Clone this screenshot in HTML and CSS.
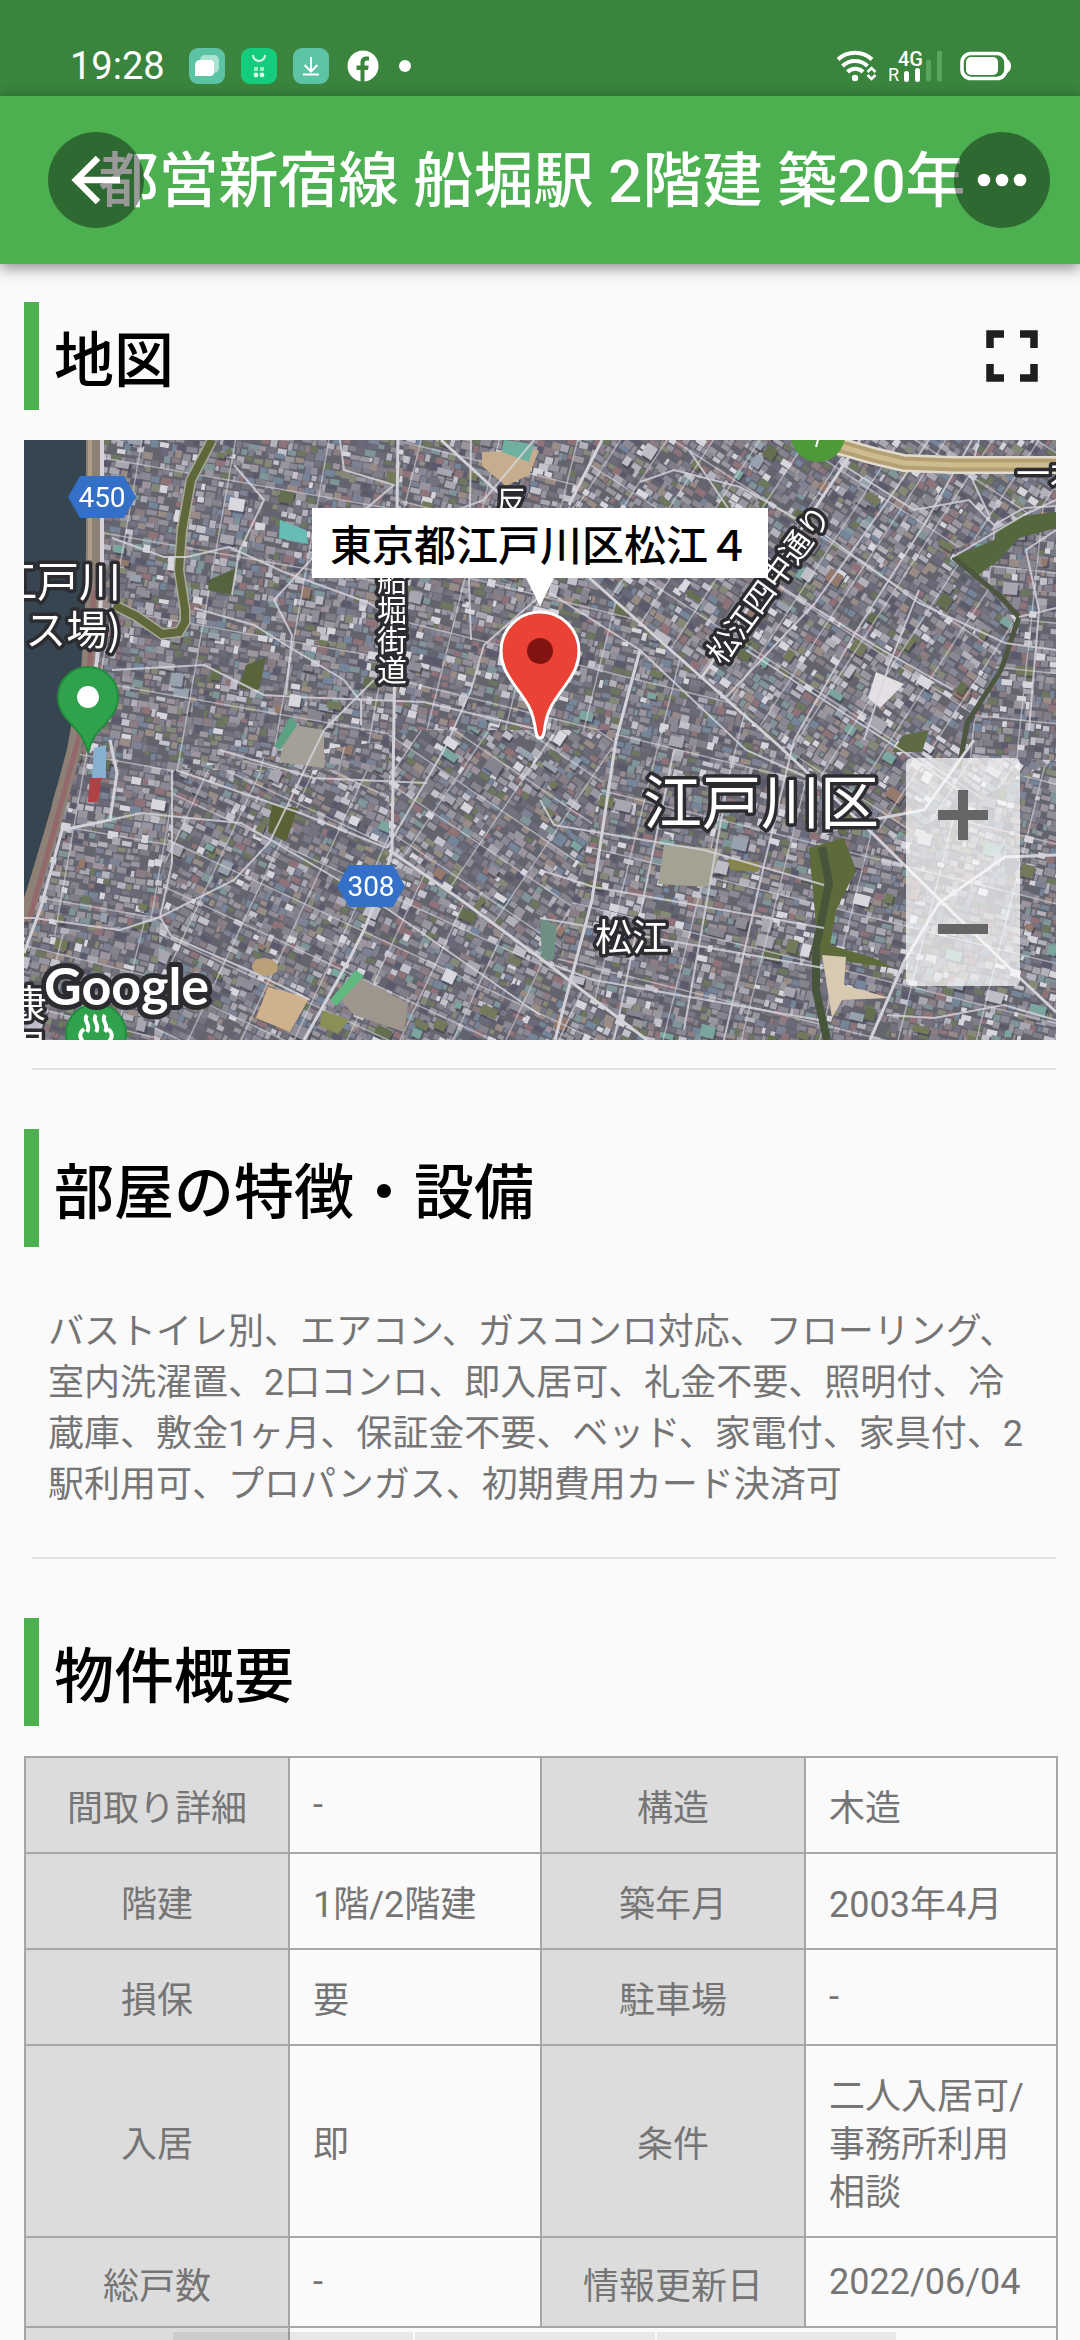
FILE: index.html
```html
<!DOCTYPE html>
<html lang="ja">
<head>
<meta charset="utf-8">
<meta name="viewport" content="width=device-width, initial-scale=1">
<title>都営新宿線 船堀駅 2階建 築20年</title>
<link rel="stylesheet" href="styles.css">
</head>
<body>
<div class="status">
  <span class="clock">19:28</span>
  <svg class="app-icon" viewBox="0 0 36 36" aria-hidden="true"><rect width="36" height="36" rx="9" fill="#5cc4a4"/><rect x="11" y="7" width="19" height="18" rx="5" fill="#a9e3d2"/><path d="M11 12h10a4 4 0 0 1 4 4v8a4 4 0 0 1-4 4H6V17a5 5 0 0 1 5-5z" fill="#fff"/></svg>
  <svg class="app-icon" viewBox="0 0 36 36" aria-hidden="true"><rect width="36" height="36" rx="9" fill="#15cb7c"/><path d="M12 7a6 6 0 0 0 12 0" fill="none" stroke="#d9fbe9" stroke-width="2"/><path d="M13 19h4v4h-4zM19 19h4v4h-4z" fill="#9eedc9"/><circle cx="15" cy="27" r="2.4" fill="#d9fbe9"/><circle cx="21" cy="27" r="2.4" fill="#d9fbe9"/></svg>
  <svg class="app-icon" viewBox="0 0 36 36" aria-hidden="true"><rect width="36" height="36" rx="9" fill="#5cc4a4"/><path d="M18 9v14M11.500 17l6.500 6.500 6.500-6.500M10 26.500h16" fill="none" stroke="#fff" stroke-width="2"/></svg>
  <svg class="app-icon" viewBox="0 0 36 36" aria-hidden="true"><circle cx="18" cy="18" r="15.500" fill="#fff"/><path d="M15.500 34V22h-4v-4.500h4v-3c0-4 2.400-6 6-6 1.200 0 2.500.2 2.500.2v3.800h-2c-1.800 0-2.500 1-2.500 2.300v2.700h4.200l-.7 4.500h-3.500v12z" fill="#3a843d"/></svg>
  <span class="more-dot"></span>
  <svg class="radio" viewBox="0 0 90 36" aria-hidden="true">
    <g fill="none" stroke="#fff" stroke-width="4"><path d="M2 11.500a25 25 0 0 1 34 0"/><path d="M6.500 18a18 18 0 0 1 25 0"/><path d="M11.500 24a11 11 0 0 1 15.500 0"/></g>
    <circle cx="19" cy="30" r="3.200" fill="#fff"/>
    <path d="M31.500 24l4-4 4 4M31.500 27l4 4 4-4" fill="none" stroke="#fff" stroke-width="2.600"/>
    <text x="52" y="33" class="radio-r">R</text>
  </svg>
  <svg class="signal" viewBox="0 0 50 36" aria-hidden="true">
    <text x="0" y="18" class="radio-g">4G</text>
    <path d="M8.500 25.500v6M19.500 22.500v9" stroke="#fff" stroke-width="5" stroke-linecap="round"/>
    <path d="M30.500 14v17M41.500 5v26" stroke="#5ba65e" stroke-width="5" stroke-linecap="round"/>
  </svg>
  <svg class="battery" viewBox="0 0 51 36" aria-hidden="true"><rect x="2" y="5.500" width="44" height="25" rx="9" fill="none" stroke="#fff" stroke-width="3.600"/><rect x="6" y="9" width="32" height="18" rx="5" fill="#fff"/><path d="M47 11c3 2 4 4 4 7s-1 5-4 7z" fill="#fff"/></svg>
</div>

<header class="appbar">
  <h1 class="title">都営新宿線 船堀駅 2階建 築20年</h1>
  <button class="round back" type="button" aria-label="戻る"><svg viewBox="0 0 96 96"><path d="M50 26L28 48l22 22M27 48h45" fill="none" stroke="#fff" stroke-width="6.500"/></svg></button>
  <button class="round menu" type="button" aria-label="メニュー"><svg viewBox="0 0 96 96"><g fill="#fff"><circle cx="30" cy="48" r="6.300"/><circle cx="48" cy="48" r="6.300"/><circle cx="66" cy="48" r="6.300"/></g></svg></button>
</header>

<main class="content">
  <section class="section">
    <div class="head">
      <h2 class="head-text">地図</h2>
      <button class="expand" type="button" aria-label="全画面表示"><svg viewBox="0 0 52 52"><path d="M4 18V4h14M34 4h14v14M48 34v14H34M18 48H4V34" fill="none" stroke="#1f1f1f" stroke-width="7.500"/></svg></button>
    </div>
    <div class="map">
      <canvas class="tiles" id="tiles" width="1032" height="600"></canvas>
      <svg class="overlay" viewBox="0 0 1032 600" lang="ja">
        <g class="labels">
          <text x="97" y="157" font-size="42" text-anchor="end">江戸川</text>
          <text x="97" y="205" font-size="41" text-anchor="end">ス場)</text>
          <text x="368" y="125" font-size="30" class="vertical">船堀街道</text>
          <text font-size="31" text-anchor="middle" transform="translate(754 151) rotate(-54)">松江四中通り</text>
          <text x="472" y="72" font-size="30">反</text>
          <text x="992" y="46" font-size="34">一木</text>
          <text x="619" y="384" font-size="59">江戸川区</text>
          <text x="571" y="511" font-size="37">松江</text>
          <text x="-15" y="577" font-size="38">康</text>
          <text x="-15" y="622" font-size="38">温</text>
        </g>
        <g class="shield">
          <path d="M56 36h44l12 21-12 21H56L44 57z"/><text x="78" y="67">450</text>
          <path d="M325 425h44l12 21-12 21h-44l-12-21z"/><text x="347" y="456">308</text>
        </g>
        <circle cx="794" cy="-5" r="27" fill="#4f9a38"/><path d="M795 -4l-3 11" stroke="#fff" stroke-width="2"/>
        <path d="M64 313c-3-14-8-19-15-27C41 277 34 270 34 257a30 30 0 0 1 60 0c0 13-7 20-15 29-7 8-12 13-15 27z" fill="#31a24c" stroke="#218c3d" stroke-width="2"/><circle cx="64" cy="257" r="11" fill="#fff"/>
        <circle cx="72" cy="594" r="30" fill="#31a24c" stroke="#218c3d" stroke-width="2"/>
        <path d="M63 575c-5 6 5 9 0 17M72 575c-5 6 5 9 0 17M81 575c-5 6 5 9 0 17M60 589c-5 4-5 8 0 14M84 589c5 4 5 8 0 14" fill="none" stroke="#fff" stroke-width="4"/>
        <text x="20" y="565" class="google">Google</text>
        <path d="M516 298c-3 0-4-3-5-12-3-20-12-28-22-43-7-10-12-19-12-32a39 39 0 0 1 78 0c0 13-5 22-12 32-10 15-19 23-22 43-1 9-2 12-5 12z" fill="#ea4335" stroke="#fff" stroke-width="3"/><circle cx="516" cy="211" r="13" fill="#811411"/>
      </svg>
      <div class="callout">東京都江戸川区松江４</div>
      <div class="zoom">
        <button type="button" aria-label="拡大"><svg viewBox="0 0 50 50"><path d="M25 0v50M0 25h50" stroke="#666" stroke-width="10"/></svg></button>
        <button type="button" aria-label="縮小"><svg viewBox="0 0 50 50"><path d="M0 25h50" stroke="#666" stroke-width="10"/></svg></button>
      </div>
    </div>
    <hr class="rule">
  </section>

  <section class="section">
    <div class="head tall"><h2 class="head-text">部屋の特徴・設備</h2></div>
    <p class="features">バストイレ別、エアコン、ガスコンロ対応、フローリング、<br>室内洗濯置、2口コンロ、即入居可、礼金不要、照明付、冷<br>蔵庫、敷金1ヶ月、保証金不要、ベッド、家電付、家具付、2<br>駅利用可、プロパンガス、初期費用カード決済可</p>
    <hr class="rule">
  </section>

  <section class="section">
    <div class="head"><h2 class="head-text">物件概要</h2></div>
    <table class="summary">
      <colgroup><col class="k"><col class="v"><col class="k"><col class="v"></colgroup>
      <tbody>
        <tr><th scope="row">間取り詳細</th><td class="latin">-</td><th scope="row">構造</th><td>木造</td></tr>
        <tr><th scope="row">階建</th><td>1階/2階建</td><th scope="row">築年月</th><td>2003年4月</td></tr>
        <tr><th scope="row">損保</th><td>要</td><th scope="row">駐車場</th><td class="latin">-</td></tr>
        <tr><th scope="row">入居</th><td>即</td><th scope="row">条件</th><td>二人入居可/<br>事務所利用<br>相談</td></tr>
        <tr class="short"><th scope="row">総戸数</th><td class="latin">-</td><th scope="row">情報更新日</th><td class="latin">2022/06/04</td></tr>
        <tr><th></th><td colspan="3"></td></tr>
      </tbody>
    </table>
  </section>
</main>
<div class="handle"><span></span><span></span><span></span></div>
<script src="tiles.js"></script>
</body>
</html>
```
FILE: styles.css
```css
* { box-sizing: border-box; }

body {
  margin: 0;
  height: 100vh;
  display: flex;
  flex-direction: column;
  overflow: hidden;
  background: #fafafa;
  color: #757575;
  font-family: Roboto, "Noto Sans CJK JP", sans-serif;
  font-size: 36px;
}

button {
  padding: 0;
  border: 0;
  background: none;
}

svg { display: block; }

.status {
  flex: none;
  display: flex;
  align-items: center;
  gap: 16px;
  height: 96px;
  padding: 36px 69px 0 70px;
  background: #3a843d;
  color: #fff;
}

.clock {
  width: 103px;
  font-size: 38px;
  line-height: 60px;
}

.app-icon { width: 36px; height: 36px; }

.more-dot {
  width: 12px;
  height: 12px;
  margin-left: 2px;
  border-radius: 50%;
  background: #fff;
}

.radio { width: 90px; height: 36px; margin-left: auto; margin-right: -44px; }
.signal { width: 50px; height: 36px; margin-right: -4px; }
.battery { width: 51px; height: 36px; }
.radio-r { font-size: 18px; fill: #fff; }
.radio-g { font-size: 20px; font-weight: 500; fill: #fff; }

.appbar {
  flex: none;
  position: relative;
  display: flex;
  align-items: center;
  justify-content: center;
  height: 168px;
  padding: 4px 16px 0 0;
  background: #4caf50;
  box-shadow: 0 4px 14px rgba(0, 0, 0, .45);
}

.title {
  margin: 0;
  color: #fff;
  font-size: 60px;
  font-weight: 500;
  line-height: 84px;
  white-space: nowrap;
}

.round {
  position: absolute;
  top: 36px;
  width: 96px;
  height: 96px;
  border-radius: 50%;
  background: rgba(0, 0, 0, .4);
}

.back { left: 48px; }
.menu { right: 30px; }

.content {
  flex: 1;
  min-height: 0;
  overflow: hidden;
  margin-top: 0;
  padding-top: 38px;
}

.appbar { z-index: 1; }

.section { padding: 0 24px; }

.head {
  display: flex;
  align-items: center;
  justify-content: space-between;
  height: 108px;
  margin-bottom: 30px;
  padding: 0 18px 0 15px;
  border-left: 15px solid #4caf50;
}

.head.tall { height: 118px; margin-bottom: 60px; }

.head-text {
  margin: 0;
  padding-top: 12px;
  color: #000;
  font-size: 60px;
  font-weight: 500;
  line-height: 84px;
}

.expand svg { width: 52px; height: 52px; }

.map {
  position: relative;
  overflow: hidden;
  aspect-ratio: 1032 / 600;
}

.tiles, .overlay {
  position: absolute;
  inset: 0;
  width: 100%;
  height: 100%;
}

.labels {
  font-family: "Noto Sans CJK JP", sans-serif;
  fill: #fff;
  stroke: #2b2b30;
  stroke-width: 7px;
  stroke-linejoin: round;
  paint-order: stroke;
}

.vertical { writing-mode: vertical-rl; }

.shield { fill: #3470c8; }
.shield text { fill: #fff; font-size: 28px; text-anchor: middle; }

.google {
  font-family: Lato, sans-serif;
  font-size: 52px;
  font-weight: 700;
  fill: #fff;
  stroke: #2b2b30;
  stroke-width: 10px;
  stroke-linejoin: round;
  paint-order: stroke;
}

.callout {
  position: absolute;
  left: 50%;
  top: 68px;
  transform: translateX(-50%);
  padding: 0 18px;
  background: #fff;
  color: #000;
  font-family: "Noto Sans CJK JP", sans-serif;
  font-size: 42px;
  font-weight: 500;
  line-height: 70px;
  white-space: nowrap;
}

.callout::after {
  content: "";
  position: absolute;
  left: 50%;
  top: 100%;
  margin-left: -14px;
  border: 14px solid transparent;
  border-top: 28px solid #fff;
  border-bottom: 0;
}

.zoom {
  position: absolute;
  right: 36px;
  bottom: 54px;
  display: flex;
  flex-direction: column;
  border-radius: 6px;
  background: rgba(255, 255, 255, .7);
}

.zoom button {
  display: grid;
  place-items: center;
  width: 114px;
  height: 114px;
}

.zoom svg { width: 50px; height: 50px; }

.rule {
  height: 2px;
  margin: 28px 0 59px 8px;
  border: 0;
  background: #e0e0e0;
}

.features {
  margin: 0 0 46px;
  padding: 0 24px;
  line-height: 51px;
  white-space: nowrap;
}

.summary {
  width: 100%;
  border-collapse: collapse;
  table-layout: fixed;
}

.k { width: 264px; }
.v { width: 252px; }

.summary th, .summary td {
  height: 96px;
  padding: 27px 23px 19px;
  border: 2px solid #a6a6a6;
  line-height: 48px;
  font-weight: 400;
  text-align: left;
  white-space: nowrap;
}

.summary td.latin { padding-top: 23px; padding-bottom: 23px; }

.summary th {
  padding-left: 0;
  padding-right: 0;
  background: #dcdcdc;
  text-align: center;
}

.summary .short th, .summary .short td {
  height: 90px;
  padding-top: 25px;
  padding-bottom: 15px;
}

.summary .short td.latin { padding-top: 20px; padding-bottom: 20px; }

.handle {
  position: fixed;
  left: 16%;
  right: 17%;
  bottom: 0;
  display: flex;
  gap: 2px;
  height: 8px;
}

.handle span { flex: 1; background: rgba(0, 0, 0, .07); }
```
FILE: tiles.js
```js
// Paints the aerial view: blocks of roofs first, then fields, water and roads.
const ctx = document.getElementById('tiles').getContext('2d');
let seed = 7;
const rnd = () => (seed = (seed * 16807) % 2147483647) / 2147483647;
const pick = list => list[Math.floor(rnd() * list.length)];

const roofs = ['#9896a0', '#84838e', '#a9a7b1', '#787886', '#b3b1bb', '#6a6a7b', '#918e9a', '#817e8a',
  '#9c979c', '#7d8294', '#9c95a0', '#8b8996', '#c3c2cc', '#74727e', '#8a7d84', '#998b86',
  '#76869a', '#7f9599', '#d6d5dc', '#8f7379', '#858978', '#6d765f', '#5a5a6c', '#8a8894'];

function trace(points) {
  ctx.beginPath();
  for (let i = 0; i < points.length; i += 2) ctx.lineTo(points[i], points[i + 1]);
}
function area(color, points) {
  trace(points);
  ctx.closePath();
  ctx.fillStyle = color;
  ctx.fill();
}
function line(color, width, points) {
  trace(points);
  ctx.strokeStyle = color;
  ctx.lineWidth = width;
  ctx.stroke();
}

function district(points, angle, stepX, stepY) {
  ctx.save();
  trace(points);
  ctx.closePath();
  ctx.clip();
  ctx.fillStyle = '#64646f';
  ctx.fill();
  ctx.translate(516, 300);
  ctx.rotate(angle * Math.PI / 180);
  for (let y = -720; y < 720; y += 7) {
    for (let x = -720; x < 720;) {
      const w = 3 + rnd() * 8;
      ctx.fillStyle = pick(roofs);
      if (rnd() > .08) ctx.fillRect(x, y + rnd() * 3, w, 4 + rnd() * 4);
      x += w + rnd() * 2;
    }
  }
  for (let i = 0; i < 1100; i++) {
    const x = rnd() * 1440 - 720;
    const y = rnd() * 1440 - 720;
    const w = 6 + rnd() * 12;
    const h = 5 + rnd() * 9;
    ctx.fillStyle = 'rgba(50,50,66,.5)';
    ctx.fillRect(x + 2, y + 2, w, h);
    ctx.fillStyle = pick(['#bfbec8', '#d9d8de', '#a7a6b1', '#98a2ae', '#646f50', '#737a5c', '#94796c', '#7ba59f', '#86848f', '#8f8d98']);
    ctx.fillRect(x, y, w, h);
  }
  ctx.strokeStyle = 'rgba(215,213,222,.6)';
  ctx.lineWidth = 1.5;
  for (let x = -720; x < 720; x += stepX) { ctx.beginPath(); ctx.moveTo(x, -720); ctx.lineTo(x, 720); ctx.stroke(); }
  for (let y = -720; y < 720; y += stepY) { ctx.beginPath(); ctx.moveTo(-720, y); ctx.lineTo(720, y); ctx.stroke(); }
  ctx.restore();
}

district([0, 0, 1032, 0, 1032, 600, 0, 600], 14, 76, 58);
district([0, 0, 380, 0, 368, 300, 150, 330, 140, 480, 0, 500], 10, 92, 74);
district([150, 330, 365, 330, 365, 410, 623, 600, 130, 600, 136, 480], 25, 48, 44);
district([365, 290, 592, 290, 531, 530, 365, 410], 34, 56, 40);
district([578, 0, 1032, 0, 1032, 320, 870, 400, 571, 143, 545, 65], 33, 39, 66);
district([930, 110, 1032, 60, 1032, 320, 935, 318, 990, 180], 6, 46, 50);

// Parks and sports grounds
area('#5d6b3b', [785, 408, 820, 398, 832, 430, 812, 470, 806, 505, 850, 518, 870, 528, 795, 518]);
area('#55673c', [929, 117, 970, 100, 975, 88, 1000, 76, 1032, 72, 1032, 88, 995, 98, 975, 120, 950, 138]);
area('#5f6b45', [880, 295, 905, 290, 898, 312, 868, 312]);
area('#56633f', [185, 140, 212, 128, 208, 155, 184, 150]);
area('#59643b', [222, 225, 242, 218, 235, 250, 215, 248]);
area('#5a6235', [248, 365, 274, 368, 262, 402, 244, 392]);
area('#d8c9b1', [798, 515, 822, 517, 820, 545, 866, 558, 818, 560, 808, 578]);
area('#a3a293', [640, 405, 698, 409, 684, 447, 634, 444]);
area('#c6ad8d', [458, 12, 515, 10, 505, 35, 482, 46, 458, 26]);
area('#70b0a0', [480, 0, 510, 4, 505, 22, 478, 12]);
area('#a49f97', [264, 284, 300, 290, 300, 328, 255, 322]);
area('#5ca183', [266, 277, 274, 284, 256, 310, 250, 306]);
area('#cfb18b', [244, 547, 285, 558, 266, 592, 232, 578]);
area('#9e958d', [332, 536, 384, 563, 380, 592, 330, 575, 318, 562]);
area('#60ba80', [332, 530, 340, 536, 312, 566, 306, 560]);
area('#8a8f55', [298, 570, 325, 580, 314, 594, 296, 586]);
area('#67bdb3', [256, 80, 282, 90, 284, 104, 255, 98]);
area('#86b0d0', [70, 308, 82, 305, 82, 338, 68, 338]);
area('#b04147', [66, 338, 78, 338, 74, 362, 64, 362]);
area('#6f8f83', [516, 478, 533, 484, 530, 518, 518, 524]);
area('#e3dfe2', [852, 232, 880, 244, 856, 268, 844, 258]);
area('#85854d', [704, 419, 735, 422, 734, 432, 706, 430]);
ctx.beginPath();
ctx.ellipse(241, 527, 13, 9, .1, 0, Math.PI * 2);
ctx.fillStyle = '#b9a079';
ctx.fill();

// River and its embankment
area('#374550', [0, 0, 62, 0, 62, 150, 58, 240, 45, 310, 31, 353, 10, 433, 0, 473]);
line('#8d8074', 14, [69, 0, 69, 110, 68, 170, 64, 230, 50, 310, 34, 370, 10, 450, 0, 480]);
line('#b09b84', 4, [66, 0, 66, 120]);
line('#94696b', 5, [70, 150, 66, 220, 54, 300, 30, 390, 5, 480]);
line('#d5d2dc', 4, [78, 0, 78, 140, 73, 220, 60, 300]);

// Canals
for (const [color, width] of [['#aaa99a', 11], ['#5f683a', 8]]) {
  line(color, width, [188, 0, 167, 40, 158, 90, 155, 130, 161, 170, 161, 182, 155, 192, 138, 194, 112, 176, 90, 165]);
}
line('#4d5640', 5, [929, 117, 975, 155, 995, 177, 977, 230, 943, 283, 935, 330]);
line('#47553b', 8, [798, 407, 805, 443, 792, 507, 792, 550, 803, 600]);

// Local streets
[
  [88, 98, 140, 117, 163, 117, 205, 107, 260, 132, 345, 163, 370, 180],
  [0, 478, 10, 478, 96, 490, 136, 477, 210, 440, 245, 403, 300, 290, 350, 240],
  [86, 380, 117, 373, 165, 378, 217, 383, 303, 433, 365, 470, 516, 575],
  [148, 330, 148, 423, 136, 477, 148, 497, 231, 533, 286, 560],
  [152, 330, 276, 373, 363, 408],
  [196, 310, 290, 338, 403, 343],
  [170, 168, 230, 185, 262, 205, 320, 240, 337, 262, 337, 285],
  [88, 230, 180, 225, 240, 255, 272, 257, 400, 262, 516, 290],
  [208, 155, 215, 112, 240, 60, 210, 25],
  [316, 0, 320, 30, 370, 45, 305, 100, 250, 160, 268, 195, 262, 255],
  [517, 155, 460, 205, 447, 250, 420, 310, 363, 408],
  [447, 0, 445, 140, 447, 200],
  [526, 153, 616, 210, 722, 310, 800, 345],
  [616, 42, 650, 30, 716, 47, 798, 93, 895, 163, 981, 203, 1032, 210],
  [665, 10, 757, 147, 850, 205, 929, 250],
  [722, 210, 877, 310, 935, 350],
  [905, 0, 860, 66, 791, 163, 702, 257],
  [948, 0, 900, 85, 833, 190, 770, 300],
  [895, 150, 865, 225, 840, 300],
  [816, 23, 890, 70, 945, 60, 970, 85, 1000, 68, 1032, 66],
  [955, 0, 946, 35, 965, 75],
  [510, 0, 460, 60, 350, 100],
  [929, 117, 1000, 75, 1032, 60],
  [995, 177, 1032, 168], [1032, 90, 1002, 110, 1015, 170, 1005, 290],
  [516, 430, 570, 447, 800, 488], [516, 478, 800, 528],
  [516, 360, 530, 385, 680, 410, 800, 445],
  [770, 300, 740, 425, 700, 600], [706, 330, 660, 590], [650, 310, 590, 600],
  [516, 520, 570, 540, 795, 580], [863, 575, 910, 578, 980, 565, 1032, 580]
].forEach(points => line('rgba(216,214,222,.8)', 2, points));

// Main roads
[
  [374, 0, 372, 140, 368, 410, 360, 440, 340, 490, 325, 520, 280, 600],
  [365, 410, 440, 462, 516, 518, 623, 600],
  [417, 0, 480, 58, 571, 143, 754, 305, 850, 395, 919, 463, 998, 540, 1032, 572],
  [578, 0, 545, 65], [616, 210, 592, 300, 568, 460, 531, 600],
  [836, 0, 790, 70, 678, 237],
  [846, 600, 881, 520, 915, 463, 981, 417, 1032, 415],
  [86, 300, 93, 333, 86, 380, 38, 390, 17, 467, 0, 513],
  [798, 395, 820, 385, 900, 370, 950, 300]
].forEach(points => line('#d4d2d9', 3, points));

// Expressway
for (const [color, width] of [['#e2dccf', 18], ['#b5a074', 13], ['#cdbd8e', 5]]) {
  line(color, width, [815, 6, 850, 16, 880, 23, 930, 25, 1032, 25]);
}
```
